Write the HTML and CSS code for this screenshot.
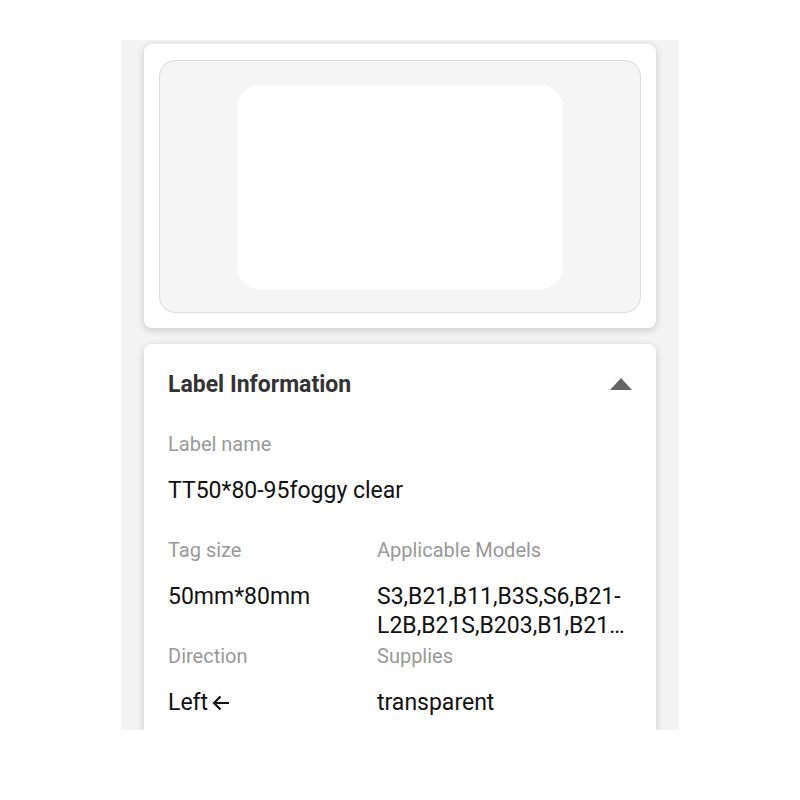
FILE: index.html
```html
<!DOCTYPE html>
<html lang="en">
<head>
    <meta charset="UTF-8">
    <meta name="viewport" content="width=device-width, initial-scale=1.0">
    <title>Label Information</title>
    <link rel="stylesheet" href="styles.css">
</head>
<body>

<div class="panel">
    <div class="card preview-card">
        <div class="preview">
            <div class="label-sheet"></div>
        </div>
    </div>

    <div class="card info-card">
        <div class="info-header">
            <h2>Label Information</h2>
            <span class="caret"></span>
        </div>

        <div class="field">
            <div class="field-name">Label name</div>
            <div class="field-value">TT50*80-95foggy clear</div>
        </div>

        <div class="field-grid">
            <div class="field">
                <div class="field-name">Tag size</div>
                <div class="field-value">50mm*80mm</div>
            </div>
            <div class="field">
                <div class="field-name">Applicable Models</div>
                <div class="field-value wrap">S3,B21,B11,B3S,S6,B21-L2B,B21S,B203,B1,B21…</div>
            </div>
            <div class="field">
                <div class="field-name">Direction</div>
                <div class="field-value">Left<svg class="arrow" width="19" height="18" viewBox="0 0 19 18"><path d="M18 9H3M9.5 2.5L3 9l6.5 6.5" fill="none" stroke="#111" stroke-width="2.2"/></svg></div>
            </div>
            <div class="field">
                <div class="field-name">Supplies</div>
                <div class="field-value">transparent</div>
            </div>
        </div>
    </div>
</div>

</body>
</html>
```

FILE: styles.css
```css
body {
    font-family: Roboto, 'Noto Sans', Arial, sans-serif;
    margin: 0;
    padding: 0;
    background: white;
}
.panel {
    width: 512px;
    height: 686px;
    margin: 40px auto 0;
    padding: 4px 23px 0;
    background: #f4f4f4;
    overflow: hidden;
}
.card {
    background: white;
    border-radius: 8px;
    box-shadow: 0 2px 8px rgba(0, 0, 0, 0.18);
}
.preview-card {
    padding: 16px 15px 15px;
    margin-bottom: 16px;
}
.preview {
    height: 251px;
    border: 1px solid #dcdcdc;
    border-radius: 16px;
    background: #f5f5f5;
    display: flex;
    align-items: center;
    justify-content: center;
}
.label-sheet {
    width: 326px;
    height: 204px;
    background: white;
    border-radius: 22px;
}
.info-card {
    padding: 24px 24px 40px;
}
.info-header {
    display: flex;
    align-items: center;
    justify-content: space-between;
    height: 32px;
    margin-bottom: 30px;
}
.info-header h2 {
    margin: 0;
    font-size: 23px;
    font-weight: bold;
    color: #333;
}
.caret {
    width: 0;
    height: 0;
    border-left: 11px solid transparent;
    border-right: 11px solid transparent;
    border-bottom: 12px solid #666;
}
.field {
    height: 106px;
}
.field-name {
    font-size: 20px;
    color: #999;
    line-height: 28px;
    margin-bottom: 18px;
}
.field-value {
    font-size: 23px;
    color: #111;
    line-height: 29px;
    display: flex;
    align-items: center;
}
.wrap {
    display: block;
}
.field-grid {
    display: grid;
    grid-template-columns: 209px 1fr;
}
.arrow {
    margin-left: 3px;
}
```
